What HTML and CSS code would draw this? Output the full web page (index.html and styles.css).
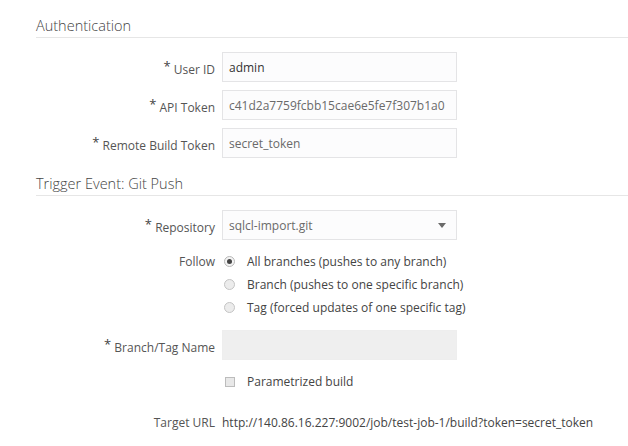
FILE: index.html
```html
<!DOCTYPE html>
<html>
<head>
<meta charset="utf-8">
<link rel="stylesheet" href="styles.css">
</head>
<body>
<div class="page">
  <h2 class="section-title">Authentication</h2>
  <div class="form">
    <div class="row">
      <label class="label"><span class="req">*</span> User ID</label>
      <div class="field"><span class="input">admin</span></div>
    </div>
    <div class="row">
      <label class="label"><span class="req">*</span> API Token</label>
      <div class="field"><span class="input faded">c41d2a7759fcbb15cae6e5fe7f307b1a0</span></div>
    </div>
    <div class="row">
      <label class="label"><span class="req">*</span> Remote Build Token</label>
      <div class="field"><span class="input faded">secret_token</span></div>
    </div>
  </div>

  <h2 class="section-title second">Trigger Event: Git Push</h2>
  <div class="form">
    <div class="row">
      <label class="label"><span class="req">*</span> Repository</label>
      <div class="field"><span class="input select"><span class="faded">sqlcl-import.git</span><span class="arrow"></span></span></div>
    </div>
    <div class="row radios-row">
      <label class="label follow">Follow</label>
      <div class="radios">
        <div class="opt"><span class="radio checked"></span><span>All branches (pushes to any branch)</span></div>
        <div class="opt"><span class="radio"></span><span>Branch (pushes to one specific branch)</span></div>
        <div class="opt"><span class="radio"></span><span>Tag (forced updates of one specific tag)</span></div>
      </div>
    </div>
    <div class="row branch-row">
      <label class="label"><span class="req">*</span> Branch/Tag Name</label>
      <div class="field"><span class="input disabled"></span></div>
    </div>
    <div class="row check-row">
      <span class="label"></span>
      <div class="opt"><span class="checkbox"></span><span>Parametrized build</span></div>
    </div>
    <div class="row url-row">
      <label class="label">Target URL</label>
      <span class="url">http://140.86.16.227:9002/job/test-job-1/build?token=secret_token</span>
    </div>
  </div>
</div>
</body>
</html>
```
FILE: styles.css
```css
html, body {
  margin: 0;
  padding: 0;
  background: #ffffff;
}
body {
  font-family: "Open Sans", "Noto Sans", sans-serif;
  font-size: 12px;
  color: #555555;
}
.page {
  padding-left: 36px;
}
.section-title {
  margin: 15px 0 0 0;
  font-size: 14.5px;
  font-weight: 300;
  line-height: 22px;
  color: #444444;
  border-bottom: 1px solid #e6e6e6;
}
.section-title.second {
  margin-top: 15px;
}
.form {
  display: flex;
  flex-direction: column;
  gap: 8px;
  padding-top: 14px;
}
.row {
  display: flex;
  align-items: center;
  gap: 7px;
}
.label {
  width: 179px;
  flex: none;
  text-align: right;
  color: #555555;
}
.req {
  font-size: 13px;
  vertical-align: 3px;
  color: #444;
}
.field {
  width: 235px;
}
.input {
  display: flex;
  align-items: center;
  box-sizing: border-box;
  height: 30px;
  width: 235px;
  padding: 0 6px;
  border: 1px solid #e4e4e6;
  background: #fcfcfd;
  color: #333333;
  white-space: nowrap;
  overflow: hidden;
}
.faded {
  color: #6a6a6a;
}
.select {
  justify-content: space-between;
  padding-right: 10px;
}
.arrow {
  width: 0;
  height: 0;
  border-left: 4px solid transparent;
  border-right: 4px solid transparent;
  border-top: 5px solid #6a6a6a;
}
.input.disabled {
  background: #efefef;
  border-color: #eeeeee;
}
.radios-row {
  align-items: flex-start;
  margin-top: 2px;
}
.follow {
  line-height: 23px;
}
.radios {
  display: flex;
  flex-direction: column;
}
.opt {
  display: flex;
  align-items: center;
  gap: 12px;
  height: 23px;
  color: #444444;
}
.radio {
  box-sizing: border-box;
  width: 11px;
  height: 11px;
  border-radius: 50%;
  border: 1px solid #c4c4c4;
  background: #ececec;
  margin-left: 2px;
  display: flex;
  align-items: center;
  justify-content: center;
}
.radio.checked {
  background: #f4f4f4;
  border-color: #b8b8b8;
}
.radio.checked::after {
  content: "";
  width: 5px;
  height: 5px;
  border-radius: 50%;
  background: #444;
}
.branch-row {
  margin-top: 3px;
}
.check-row {
  margin-top: 2px;
}
.checkbox {
  box-sizing: border-box;
  width: 10px;
  height: 10px;
  border: 1px solid #bcbcbc;
  background: #e8e8e8;
  margin-left: 3px;
}
.url-row {
  margin-top: 13px;
}
.url {
  color: #444444;
  white-space: nowrap;
}
```
